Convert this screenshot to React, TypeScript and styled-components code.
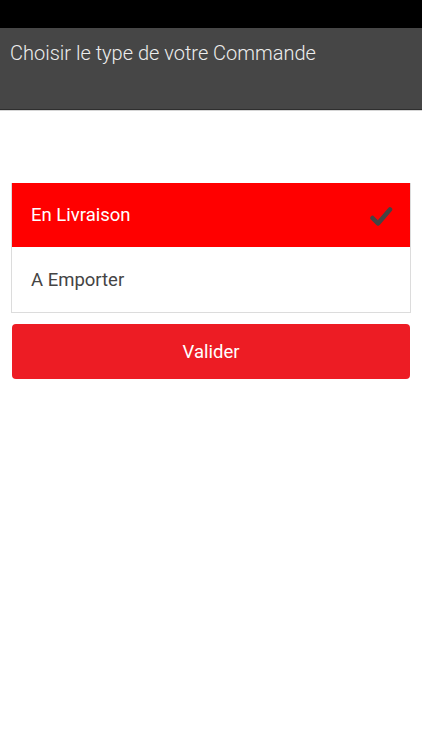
import * as React from 'react'
import {useState} from 'react'
import styled, {createGlobalStyle} from 'styled-components'

const GlobalStyle = createGlobalStyle`
  html, body {
    margin: 0;
    padding: 0;
    background: #ffffff;
    font-family: Roboto, "Liberation Sans", sans-serif;
  }
`;

const Screen = styled.div`
  width: 422px;
  min-height: 750px;
  display: flex;
  flex-direction: column;
  background: #ffffff;
`;

const StatusBar = styled.div`
  height: 28px;
  background: #000000;
`;

const Header = styled.div`
  height: 82px;
  background: #464646;
  border-bottom: 1px solid #2e2e2e;
  box-shadow: 0 1px 0 #d6d6d6;
  padding: 12px 10px 0;
  box-sizing: border-box;
`;

const Title = styled.h1`
  margin: 0;
  font-family: Roboto, "Liberation Sans", sans-serif;
  font-weight: 300;
  font-size: 20px;
  line-height: 26px;
  color: #ededed;
`;

const Content = styled.div`
  padding: 73px 11px 0;
  display: flex;
  flex-direction: column;
  gap: 11px;
`;

const OptionList = styled.div`
  display: flex;
  flex-direction: column;
  border: 1px solid #dcdcdc;
  border-top: none;
`;

const Option = styled.div<{ $selected: boolean }>`
  height: 64px;
  display: flex;
  align-items: center;
  justify-content: space-between;
  padding: 0 17px 0 19px;
  background: ${p => (p.$selected ? '#ff0000' : '#ffffff')};
  color: ${p => (p.$selected ? '#ffffff' : '#444444')};
  font-size: 18.5px;
  cursor: pointer;
  & + & {
    height: 65px;
  }
`;

const Check = styled.svg`
  width: 24px;
  height: 24px;
  margin-top: 4px;
`;

const ValidateButton = styled.button`
  height: 55px;
  margin: 0 1px;
  border: none;
  border-radius: 4px;
  background: #ed1c24;
  color: #ffffff;
  font-family: Roboto, "Liberation Sans", sans-serif;
  font-size: 18.5px;
  cursor: pointer;
`;

const choices = ['En Livraison', 'A Emporter'];

export default function App() {
  const [selected, setSelected] = useState(0);

  return (
    <Screen>
      <GlobalStyle />
      <StatusBar />
      <Header>
        <Title>Choisir le type de votre Commande</Title>
      </Header>
      <Content>
        <OptionList>
          {choices.map((c, i) => (
            <Option key={c} $selected={i === selected} onClick={() => setSelected(i)}>
              <span>{c}</span>
              {i === selected && (
                <Check viewBox="0 0 24 24">
                  <path d="M3.5 13 L9 18.5 L21 4.5" fill="none" stroke="#444444" strokeWidth="4.5" strokeLinecap="round" strokeLinejoin="round" />
                </Check>
              )}
            </Option>
          ))}
        </OptionList>
        <ValidateButton>Valider</ValidateButton>
      </Content>
    </Screen>
  );
}
